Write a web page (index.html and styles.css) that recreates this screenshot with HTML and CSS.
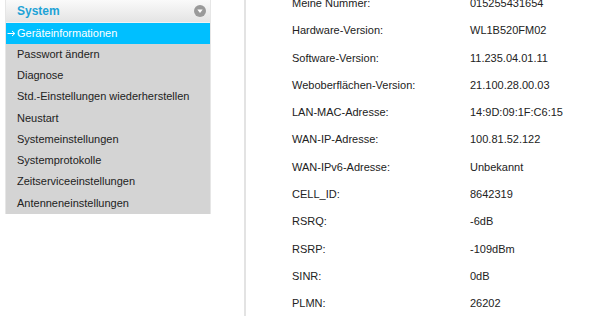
FILE: index.html
```html
<!DOCTYPE html>
<html lang="de">
<head>
    <meta charset="UTF-8">
    <meta name="viewport" content="width=device-width, initial-scale=1.0">
    <title>Geräteinformationen</title>
    <link rel="stylesheet" href="styles.css">
</head>
<body>
    <div class="page">
        <div class="sidebar">
            <div class="menu">
                <div class="menu-header">
                    <span class="menu-title">System</span>
                    <span class="menu-toggle">
                        <svg width="12" height="12" viewBox="0 0 12 12">
                            <circle cx="6" cy="6" r="6" fill="#9a9a9a"/>
                            <path d="M3.3 4.6 L8.7 4.6 L6 7.9 Z" fill="#fff"/>
                        </svg>
                    </span>
                </div>
                <ul class="menu-list">
                    <li class="active">
                        <svg class="arrow" width="9" height="7" viewBox="0 0 9 7">
                            <path d="M0.5 3.5 H7.5 M5 1 L7.8 3.5 L5 6" fill="none" stroke="#fff" stroke-width="1"/>
                        </svg>Geräteinformationen
                    </li>
                    <li>Passwort ändern</li>
                    <li>Diagnose</li>
                    <li>Std.-Einstellungen wiederherstellen</li>
                    <li>Neustart</li>
                    <li>Systemeinstellungen</li>
                    <li>Systemprotokolle</li>
                    <li>Zeitserviceeinstellungen</li>
                    <li>Antenneneinstellungen</li>
                </ul>
            </div>
        </div>

        <div class="content">
            <table class="info-table">
                <tr><td>Meine Nummer:</td><td>015255431654</td></tr>
                <tr><td>Hardware-Version:</td><td>WL1B520FM02</td></tr>
                <tr><td>Software-Version:</td><td>11.235.04.01.11</td></tr>
                <tr><td>Weboberflächen-Version:</td><td>21.100.28.00.03</td></tr>
                <tr><td>LAN-MAC-Adresse:</td><td>14:9D:09:1F:C6:15</td></tr>
                <tr><td>WAN-IP-Adresse:</td><td>100.81.52.122</td></tr>
                <tr><td>WAN-IPv6-Adresse:</td><td>Unbekannt</td></tr>
                <tr><td>CELL_ID:</td><td>8642319</td></tr>
                <tr><td>RSRQ:</td><td>-6dB</td></tr>
                <tr><td>RSRP:</td><td>-109dBm</td></tr>
                <tr><td>SINR:</td><td>0dB</td></tr>
                <tr><td>PLMN:</td><td>26202</td></tr>
            </table>
        </div>
    </div>
</body>
</html>
```

FILE: styles.css
```css
* {
    box-sizing: border-box;
    margin: 0;
    padding: 0;
}

body {
    font-family: "Liberation Sans", Arial, sans-serif;
    font-size: 11px;
    color: #222;
    background: #fff;
    overflow: hidden;
}

.page {
    display: flex;
    height: 316px;
}

.sidebar {
    width: 244px;
    padding-left: 5px;
}

.menu {
    width: 206px;
    border-left: 1px solid #e6e6e6;
    border-right: 1px solid #e6e6e6;
}

.menu-header {
    height: 22.5px;
    display: flex;
    align-items: center;
    justify-content: space-between;
    padding: 0 4px 0 11px;
    background: linear-gradient(#fafafa, #e4e4e4);
    border-bottom: 1px solid #f2f2f2;
}

.menu-title {
    color: #1ea3d6;
    font-weight: bold;
    font-size: 12px;
}

.menu-toggle {
    display: flex;
}

.menu-list {
    list-style: none;
    background: #d4d4d4;
}

.menu-list li {
    height: 21.25px;
    line-height: 21.25px;
    padding-left: 11px;
    white-space: nowrap;
}

.menu-list li.active {
    display: flex;
    align-items: center;
    background: #00bfff;
    color: #fff;
    padding-left: 1px;
}

.arrow {
    margin-right: 1px;
}

.content {
    flex: 1;
    border-left: 2px solid #e3e3e3;
    padding-left: 46px;
}

.info-table {
    border-collapse: collapse;
    margin-top: -10.7px;
}

.info-table td {
    height: 27.3px;
    padding: 0;
    white-space: nowrap;
}

.info-table td:first-child {
    width: 178px;
}
```
